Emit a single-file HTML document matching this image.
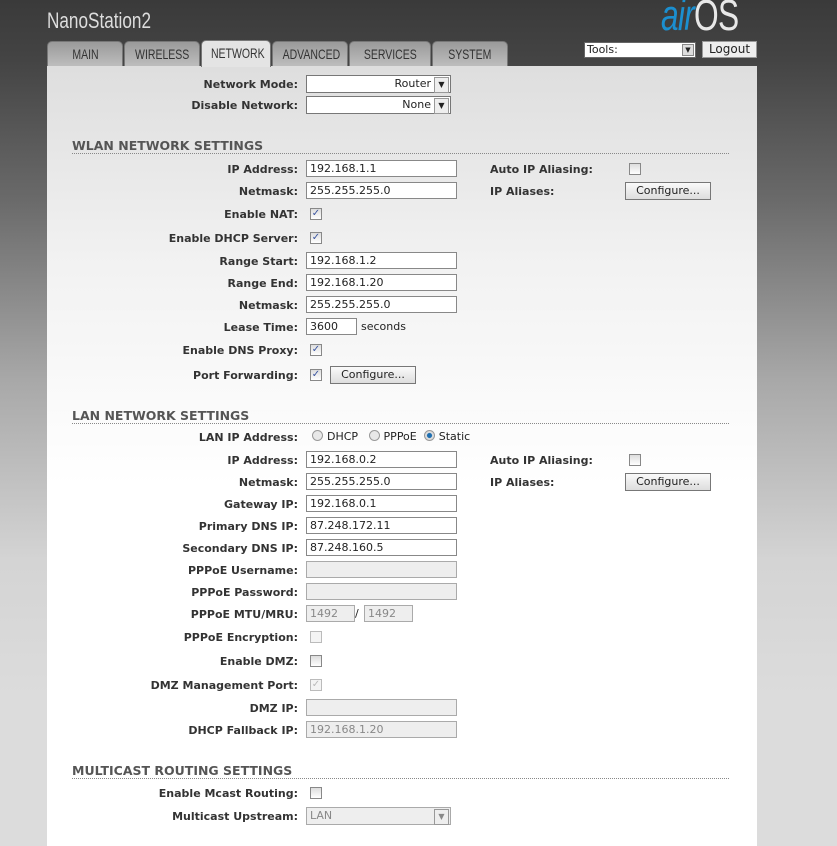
<!DOCTYPE html>
<html><head><meta charset="utf-8"><style>
*{box-sizing:border-box;margin:0;padding:0}
html{background:#dcdcdc}
body{width:837px;height:843px;overflow:hidden;position:relative;font-family:"DejaVu Sans",Verdana,sans-serif;font-size:11px;color:#222;
background:linear-gradient(#3a3a3a 0px,#444 60px,#6a6a6a 200px,#a8a8a8 380px,#d4d4d4 560px,#dcdcdc 700px)}
.title{position:absolute;left:47px;top:8px;color:#ddd;font-family:"Liberation Sans",sans-serif;font-size:22px;transform:scaleX(.78);transform-origin:left}
.logo{position:absolute;left:661px;top:-9px;font-family:"Liberation Sans",sans-serif;font-size:44px;transform:scaleX(.72);transform-origin:left;letter-spacing:-1px}
.logo .a{color:#1b8fd0;font-style:italic}.logo .o{color:#e8e8e8}
.tab{position:absolute;top:41px;height:25px;border-radius:5px 5px 0 0;background:linear-gradient(#9a9a9a,#bdbdbd);border:1px solid #777;border-bottom:none;color:#333;text-align:center;line-height:25px;font-family:"Liberation Sans",sans-serif;font-size:14px}
.tab span{display:inline-block;transform:scaleX(.75)}
.tab.on{background:#e4e4e4;color:#333;top:40px;height:27px}
.panel{position:absolute;left:47px;top:66px;width:710px;height:780px;background:linear-gradient(#dedede 0,#f2f2f2 200px,#fff 420px)}
.row{position:absolute;left:0;height:18px;width:837px}
.lb{position:absolute;right:539px;top:3px;font-weight:bold;white-space:nowrap;color:#333}
.in{position:absolute;left:306px;top:0;width:151px;height:17px;border:1px solid #888;background:#fff;padding-left:3px;line-height:15px;font-size:11px;color:#222}
.in.d{background:#eee;color:#888;border-color:#aaa}
.cb{position:absolute;top:3px;width:12px;height:12px;border:1px solid #888;background:linear-gradient(#ddd,#fff);font-size:10px;line-height:10px;text-align:center;color:#3a55a0}
.cb.d{border-color:#bbb;color:#bbb}
.btn{position:absolute;top:0;height:18px;border:1px solid #777;background:linear-gradient(#fafafa,#ddd);text-align:center;line-height:16px}
.hd{position:absolute;left:72px;width:657px;font-weight:bold;font-size:12.5px;color:#555;border-bottom:1px dotted #888;height:14px;line-height:11px}
.sel{position:absolute;left:306px;top:0;width:145px;height:18px;border:1px solid #777;background:#fff;text-align:right;padding-right:19px;line-height:16px}
.sel:after{content:"▼";position:absolute;right:1px;top:1px;width:13px;height:14px;font-size:8px;line-height:14px;text-align:center;border:1px solid #999;background:#eee}
.r{display:inline-block;width:11px;height:11px;border-radius:50%;border:1px solid #999;background:#e8e8e8;vertical-align:-1px;margin-right:4px}
</style></head><body>
<div class="title">NanoStation2</div>
<div class="logo"><span class="a">air</span><span class="o">OS</span></div>
<div class="tab" style="left:47px;width:76px"><span>MAIN</span></div>
<div class="tab" style="left:124px;width:76px"><span>WIRELESS</span></div>
<div class="tab" style="left:272px;width:76px"><span>ADVANCED</span></div>
<div class="tab" style="left:349px;width:82px"><span>SERVICES</span></div>
<div class="tab" style="left:432px;width:76px"><span>SYSTEM</span></div>
<div style="position:absolute;left:584px;top:42px;width:112px;height:16px;background:#fff;border:1px solid #666;font-size:11px;padding-left:2px;line-height:14px">Tools:<span style="position:absolute;right:1px;top:1px;width:12px;height:12px;background:#ddd;border:1px solid #888;font-size:7px;line-height:11px;text-align:center">▼</span></div>
<div style="position:absolute;left:702px;top:41px;width:55px;height:17px;background:#eee;border:1px solid #999;text-align:center;line-height:15px;font-size:12px">Logout</div>
<div class="panel"></div>
<div class="tab on" style="left:201px;width:70px"><span>NETWORK</span></div>

<div class="row" style="top:75px"><span class="lb">Network Mode:</span><span class="sel">Router</span></div>
<div class="row" style="top:96px"><span class="lb">Disable Network:</span><span class="sel">None</span></div>

<div class="hd" style="top:140px">WLAN NETWORK SETTINGS</div>
<div class="row" style="top:160px"><span class="lb">IP Address:</span><span class="in">192.168.1.1</span><span class="lb" style="right:auto;left:490px">Auto IP Aliasing:</span><span class="cb" style="left:629px"></span></div>
<div class="row" style="top:182px"><span class="lb">Netmask:</span><span class="in">255.255.255.0</span><span class="lb" style="right:auto;left:490px">IP Aliases:</span><span class="btn" style="left:625px;width:86px">Configure...</span></div>
<div class="row" style="top:205px"><span class="lb">Enable NAT:</span><span class="cb" style="left:310px">✓</span></div>
<div class="row" style="top:229px"><span class="lb">Enable DHCP Server:</span><span class="cb" style="left:310px">✓</span></div>
<div class="row" style="top:252px"><span class="lb">Range Start:</span><span class="in">192.168.1.2</span></div>
<div class="row" style="top:274px"><span class="lb">Range End:</span><span class="in">192.168.1.20</span></div>
<div class="row" style="top:296px"><span class="lb">Netmask:</span><span class="in">255.255.255.0</span></div>
<div class="row" style="top:318px"><span class="lb">Lease Time:</span><span class="in" style="width:51px">3600</span><span style="position:absolute;left:361px;top:2px">seconds</span></div>
<div class="row" style="top:341px"><span class="lb">Enable DNS Proxy:</span><span class="cb" style="left:310px">✓</span></div>
<div class="row" style="top:366px"><span class="lb">Port Forwarding:</span><span class="cb" style="left:310px">✓</span><span class="btn" style="left:330px;width:86px">Configure...</span></div>

<div class="hd" style="top:410px">LAN NETWORK SETTINGS</div>
<div class="row" style="top:428px"><span class="lb">LAN IP Address:</span><span style="position:absolute;left:312px;top:2px"><span class="r"></span>DHCP &nbsp; <span class="r"></span>PPPoE &nbsp;<span class="r" style="background:radial-gradient(#1f6fb0 35%,#ddd 45%)"></span>Static</span></div>
<div class="row" style="top:451px"><span class="lb">IP Address:</span><span class="in">192.168.0.2</span><span class="lb" style="right:auto;left:490px">Auto IP Aliasing:</span><span class="cb" style="left:629px"></span></div>
<div class="row" style="top:473px"><span class="lb">Netmask:</span><span class="in">255.255.255.0</span><span class="lb" style="right:auto;left:490px">IP Aliases:</span><span class="btn" style="left:625px;width:86px">Configure...</span></div>
<div class="row" style="top:495px"><span class="lb">Gateway IP:</span><span class="in">192.168.0.1</span></div>
<div class="row" style="top:517px"><span class="lb">Primary DNS IP:</span><span class="in">87.248.172.11</span></div>
<div class="row" style="top:539px"><span class="lb">Secondary DNS IP:</span><span class="in">87.248.160.5</span></div>
<div class="row" style="top:561px"><span class="lb">PPPoE Username:</span><span class="in d"></span></div>
<div class="row" style="top:583px"><span class="lb">PPPoE Password:</span><span class="in d"></span></div>
<div class="row" style="top:605px"><span class="lb">PPPoE MTU/MRU:</span><span class="in d" style="width:49px">1492</span><span style="position:absolute;left:355px;top:2px">/</span><span class="in d" style="left:364px;width:49px">1492</span></div>
<div class="row" style="top:628px"><span class="lb">PPPoE Encryption:</span><span class="cb d" style="left:310px;background:#f4f4f4"></span></div>
<div class="row" style="top:652px"><span class="lb">Enable DMZ:</span><span class="cb" style="left:310px"></span></div>
<div class="row" style="top:676px"><span class="lb">DMZ Management Port:</span><span class="cb d" style="left:310px;background:#f4f4f4">✓</span></div>
<div class="row" style="top:699px"><span class="lb">DMZ IP:</span><span class="in d"></span></div>
<div class="row" style="top:721px"><span class="lb">DHCP Fallback IP:</span><span class="in d">192.168.1.20</span></div>

<div class="hd" style="top:765px">MULTICAST ROUTING SETTINGS</div>
<div class="row" style="top:784px"><span class="lb">Enable Mcast Routing:</span><span class="cb" style="left:310px"></span></div>
<div class="row" style="top:807px"><span class="lb">Multicast Upstream:</span><span class="sel" style="text-align:left;padding-left:3px;background:#eee;color:#888;border-color:#aaa">LAN</span></div>
</body></html>
